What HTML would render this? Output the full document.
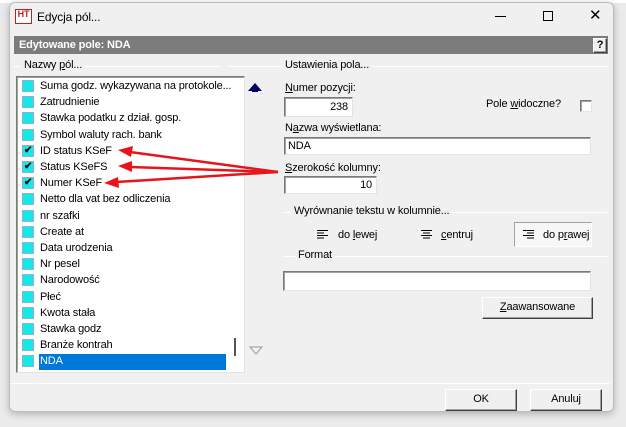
<!DOCTYPE html>
<html><head><meta charset="utf-8"><style>
*{box-sizing:border-box;margin:0;padding:0}
body{width:626px;height:427px;background:#ebebeb;position:relative;overflow:hidden;font-family:"Liberation Sans",sans-serif;font-size:11px;color:#000;letter-spacing:-0.15px}
.a{position:absolute;white-space:nowrap}
.win{left:9px;top:2px;width:605px;height:410px;background:#f0f0f0;border:1px solid #bdbdbd;border-radius:6px;box-shadow:0 2px 8px rgba(0,0,0,.25)}
.inp{background:#fff;border:1px solid;border-color:#7a7a7a #e3e3e3 #e3e3e3 #7a7a7a;box-shadow:inset 1px 1px 0 #a0a0a0}
.btn{background:#f0f0f0;border:1px solid;border-color:#fff #404040 #404040 #fff;box-shadow:inset -1px -1px 0 #a0a0a0;text-align:center;line-height:19px}
.gl{height:1px;background:#a0a0a0;border-bottom:1px solid #fff}
.lbl{background:#f0f0f0;padding:0 3px;line-height:13px}
.it{position:absolute;left:0;height:16px;line-height:17px;width:210px;white-space:nowrap}
.cb{position:absolute;left:7px;top:3px;width:10px;height:10px;background:#15e9e6;box-shadow:0 0 0 1px #9ad}
.it span{position:absolute;left:24px;white-space:nowrap}
u{text-decoration:underline}
</style></head><body>
<div class="a" style="left:0;top:0;width:626px;height:3px;background:#fff"></div>
<div class="a win"></div>
<div class="a" style="left:15px;top:9px;width:17px;height:15px;background:#fff;border:1px solid #b22;color:#b22;font-weight:bold;font-size:9px;line-height:9px;text-align:center">HT</div>
<div class="a" style="left:37px;top:10px;font-size:12px">Edycja pól...</div>
<div class="a" style="left:495px;top:16px;width:11px;height:1px;background:#000"></div>
<div class="a" style="left:543px;top:11px;width:10px;height:10px;border:1px solid #000"></div>
<div class="a" style="left:589px;top:6px;font-size:15px">✕</div>
<div class="a" style="left:14px;top:36px;width:594px;height:18px;background:#7c7c7c;color:#fff;font-weight:bold;font-size:11px;line-height:18px;padding-left:5px">Edytowane pole: NDA</div>
<div class="a btn" style="left:593px;top:38px;width:14px;height:15px;line-height:13px;font-weight:bold">?</div>
<div class="a gl" style="left:14px;top:66px;width:207px"></div>
<div class="a lbl" style="left:21px;top:59px">Nazwy <u>p</u>ól...</div>
<div class="a gl" style="left:228px;top:66px;width:380px"></div>
<div class="a lbl" style="left:282px;top:59px">Ustawienia pola...</div>
<div class="a inp" style="left:16px;top:76px;width:229px;height:297px"></div>
<div class="a" style="left:39px;top:354px;width:187px;height:16px;background:#0078d7"></div>
<div class="a" style="left:16px;top:78px">
<div class="it" style="top:0"><i class="cb"></i><span>Suma godz. wykazywana na protokole...</span></div>
<div class="it" style="top:16.2px"><i class="cb"></i><span>Zatrudnienie</span></div>
<div class="it" style="top:32.4px"><i class="cb"></i><span>Stawka podatku z dział. gosp.</span></div>
<div class="it" style="top:48.6px"><i class="cb"></i><span>Symbol waluty rach. bank</span></div>
<div class="it" style="top:64.8px"><i class="cb"></i><b style="position:absolute;left:8px;top:-1px;font-size:10px">✔</b><span>ID status KSeF</span></div>
<div class="it" style="top:81px"><i class="cb"></i><b style="position:absolute;left:8px;top:-1px;font-size:10px">✔</b><span>Status KSeFS</span></div>
<div class="it" style="top:97.2px"><i class="cb"></i><b style="position:absolute;left:8px;top:-1px;font-size:10px">✔</b><span>Numer KSeF</span></div>
<div class="it" style="top:113.4px"><i class="cb"></i><span>Netto dla vat bez odliczenia</span></div>
<div class="it" style="top:129.6px"><i class="cb"></i><span>nr szafki</span></div>
<div class="it" style="top:145.8px"><i class="cb"></i><span>Create at</span></div>
<div class="it" style="top:162px"><i class="cb"></i><span>Data urodzenia</span></div>
<div class="it" style="top:178.2px"><i class="cb"></i><span>Nr pesel</span></div>
<div class="it" style="top:194.4px"><i class="cb"></i><span>Narodowość</span></div>
<div class="it" style="top:210.6px"><i class="cb"></i><span>Płeć</span></div>
<div class="it" style="top:226.8px"><i class="cb"></i><span>Kwota stała</span></div>
<div class="it" style="top:243px"><i class="cb"></i><span>Stawka godz</span></div>
<div class="it" style="top:259.2px"><i class="cb"></i><span>Branże kontrah</span></div>
<div class="it" style="top:275.4px"><i class="cb"></i><span style="color:#fff">NDA</span></div>
</div>
<div class="a" style="left:234px;top:338px;width:2px;height:18px;background:#555"></div>
<svg class="a" style="left:246px;top:80px" width="18" height="14"><polygon points="2,11 9,3 16,11 12,11 12,12 6,12 6,11" fill="#000060"/></svg>
<svg class="a" style="left:248px;top:344px" width="16" height="12"><polygon points="2,3 14,3 8,10" fill="none" stroke="#999"/></svg>
<div class="a" style="left:285px;top:82px"><u>N</u>umer pozycji:</div>
<div class="a inp" style="left:284px;top:97px;width:69px;height:20px;text-align:right;padding-right:4px;line-height:18px">238</div>
<div class="a" style="left:486px;top:98px">Pole <u>w</u>idoczne?</div>
<div class="a inp" style="left:580px;top:100px;width:12px;height:12px"></div>
<div class="a" style="left:285px;top:122px">N<u>a</u>zwa wyświetlana:</div>
<div class="a inp" style="left:284px;top:137px;width:307px;height:18px;padding-left:3px;line-height:16px">NDA</div>
<div class="a" style="left:285px;top:162px"><u>S</u>zerokość kolumny:</div>
<div class="a inp" style="left:284px;top:176px;width:93px;height:18px;text-align:right;padding-right:4px;line-height:16px">10</div>
<div class="a gl" style="left:283px;top:212px;width:324px"></div>
<div class="a lbl" style="left:291px;top:205px">Wyrównanie tekstu w kolumnie...</div>
<div class="a" style="left:514px;top:222px;width:78px;height:25px;background:#f7f7f7;border:1px solid;border-color:#a0a0a0 #fff #fff #a0a0a0"></div>
<svg class="a" style="left:317px;top:230px" width="12" height="10"><path d="M0 .5h11M0 3h7M0 5.5h11M0 8h7" stroke="#000"/></svg>
<div class="a" style="left:338px;top:229px">do <u>l</u>ewej</div>
<svg class="a" style="left:421px;top:230px" width="12" height="10"><path d="M0 .5h11M2 3h7M0 5.5h11M2 8h7" stroke="#000"/></svg>
<div class="a" style="left:441px;top:229px"><u>c</u>entruj</div>
<svg class="a" style="left:523px;top:230px" width="12" height="10"><path d="M0 .5h11M4 3h7M0 5.5h11M4 8h7" stroke="#000"/></svg>
<div class="a" style="left:543px;top:229px">do p<u>r</u>awej</div>
<div class="a gl" style="left:283px;top:256px;width:324px"></div>
<div class="a lbl" style="left:295px;top:249px">Format</div>
<div class="a inp" style="left:283px;top:271px;width:308px;height:20px"></div>
<div class="a btn" style="left:482px;top:297px;width:111px;height:22px"><u>Z</u>aawansowane</div>
<div class="a gl" style="left:10px;top:383px;width:600px"></div>
<div class="a btn" style="left:445px;top:389px;width:72px;height:22px">OK</div>
<div class="a btn" style="left:530px;top:389px;width:72px;height:22px">Anuluj</div>
<svg class="a" style="left:0;top:0" width="626" height="427">
<g stroke="#e8141c" stroke-width="2.5" fill="#e8141c">
<line x1="278" y1="172" x2="130" y2="152"/>
<line x1="278" y1="172" x2="130" y2="167"/>
<line x1="278" y1="172" x2="116" y2="182"/>
</g>
<g fill="#e8141c">
<polygon points="118,150 133,146 131,157"/>
<polygon points="118,166 132,161 132,172"/>
<polygon points="104,183 118,177 119,188"/>
</g>
</svg>
</body></html>
